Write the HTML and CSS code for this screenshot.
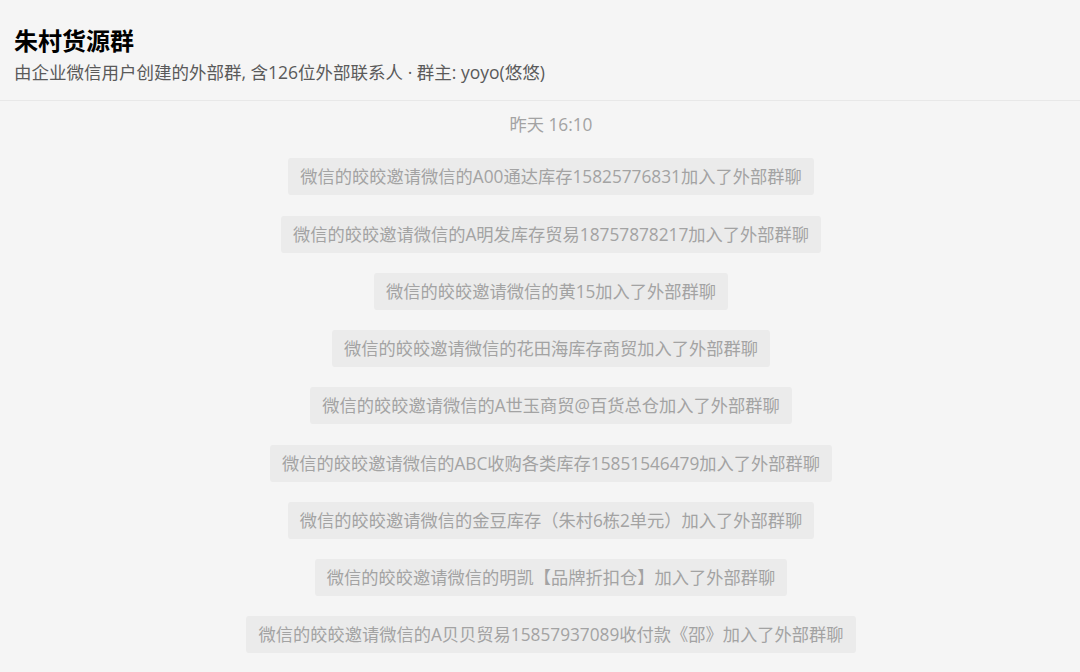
FILE: index.html
```html
<!DOCTYPE html>
<html lang="zh">
<head>
<meta charset="utf-8">
<link rel="stylesheet" href="styles.css">
</head>
<body>
<header class="header">
  <h1 class="title">朱村货源群</h1>
  <p class="subtitle">由企业微信用户创建的外部群, 含126位外部联系人 · 群主: yoyo(悠悠)</p>
</header>
<main class="chat">
  <div class="time">昨天 16:10</div>
  <div class="notice">微信的皎皎邀请微信的A00通达库存15825776831加入了外部群聊</div>
  <div class="notice">微信的皎皎邀请微信的A明发库存贸易18757878217加入了外部群聊</div>
  <div class="notice">微信的皎皎邀请微信的黄15加入了外部群聊</div>
  <div class="notice">微信的皎皎邀请微信的花田海库存商贸加入了外部群聊</div>
  <div class="notice">微信的皎皎邀请微信的A世玉商贸@百货总仓加入了外部群聊</div>
  <div class="notice">微信的皎皎邀请微信的ABC收购各类库存15851546479加入了外部群聊</div>
  <div class="notice">微信的皎皎邀请微信的金豆库存（朱村6栋2单元）加入了外部群聊</div>
  <div class="notice">微信的皎皎邀请微信的明凯【品牌折扣仓】加入了外部群聊</div>
  <div class="notice">微信的皎皎邀请微信的A贝贝贸易15857937089收付款《邵》加入了外部群聊</div>
</main>
</body>
</html>
```

FILE: styles.css
```css
* { box-sizing: border-box; }
html, body {
  margin: 0;
  padding: 0;
  background: #f5f5f5;
  font-family: "Open Sans", "Noto Sans CJK SC", sans-serif;
  overflow: hidden;
  height: 672px;
}
.header {
  height: 101px;
  padding: 24px 14px 0;
  border-bottom: 1px solid #e8e8e8;
}
.title {
  margin: 0;
  font-size: 24px;
  line-height: 32px;
  font-weight: 700;
  color: #000;
  font-family: "Noto Sans CJK SC", sans-serif;
}
.subtitle {
  margin: 0;
  font-size: 17.5px;
  line-height: 32px;
  color: #5a5a5a;
}
.chat {
  display: flex;
  flex-direction: column;
  align-items: center;
  padding-top: 11px;
  padding-left: 22px;
  gap: 20.25px;
}
.time {
  font-size: 17.25px;
  line-height: 26px;
  color: #a3a3a3;
}
.notice {
  background: #ebebeb;
  border-radius: 3px;
  padding: 0 12px;
  height: 37px;
  line-height: 37px;
  font-size: 17.25px;
  color: #a3a3a3;
  white-space: nowrap;
}
```
